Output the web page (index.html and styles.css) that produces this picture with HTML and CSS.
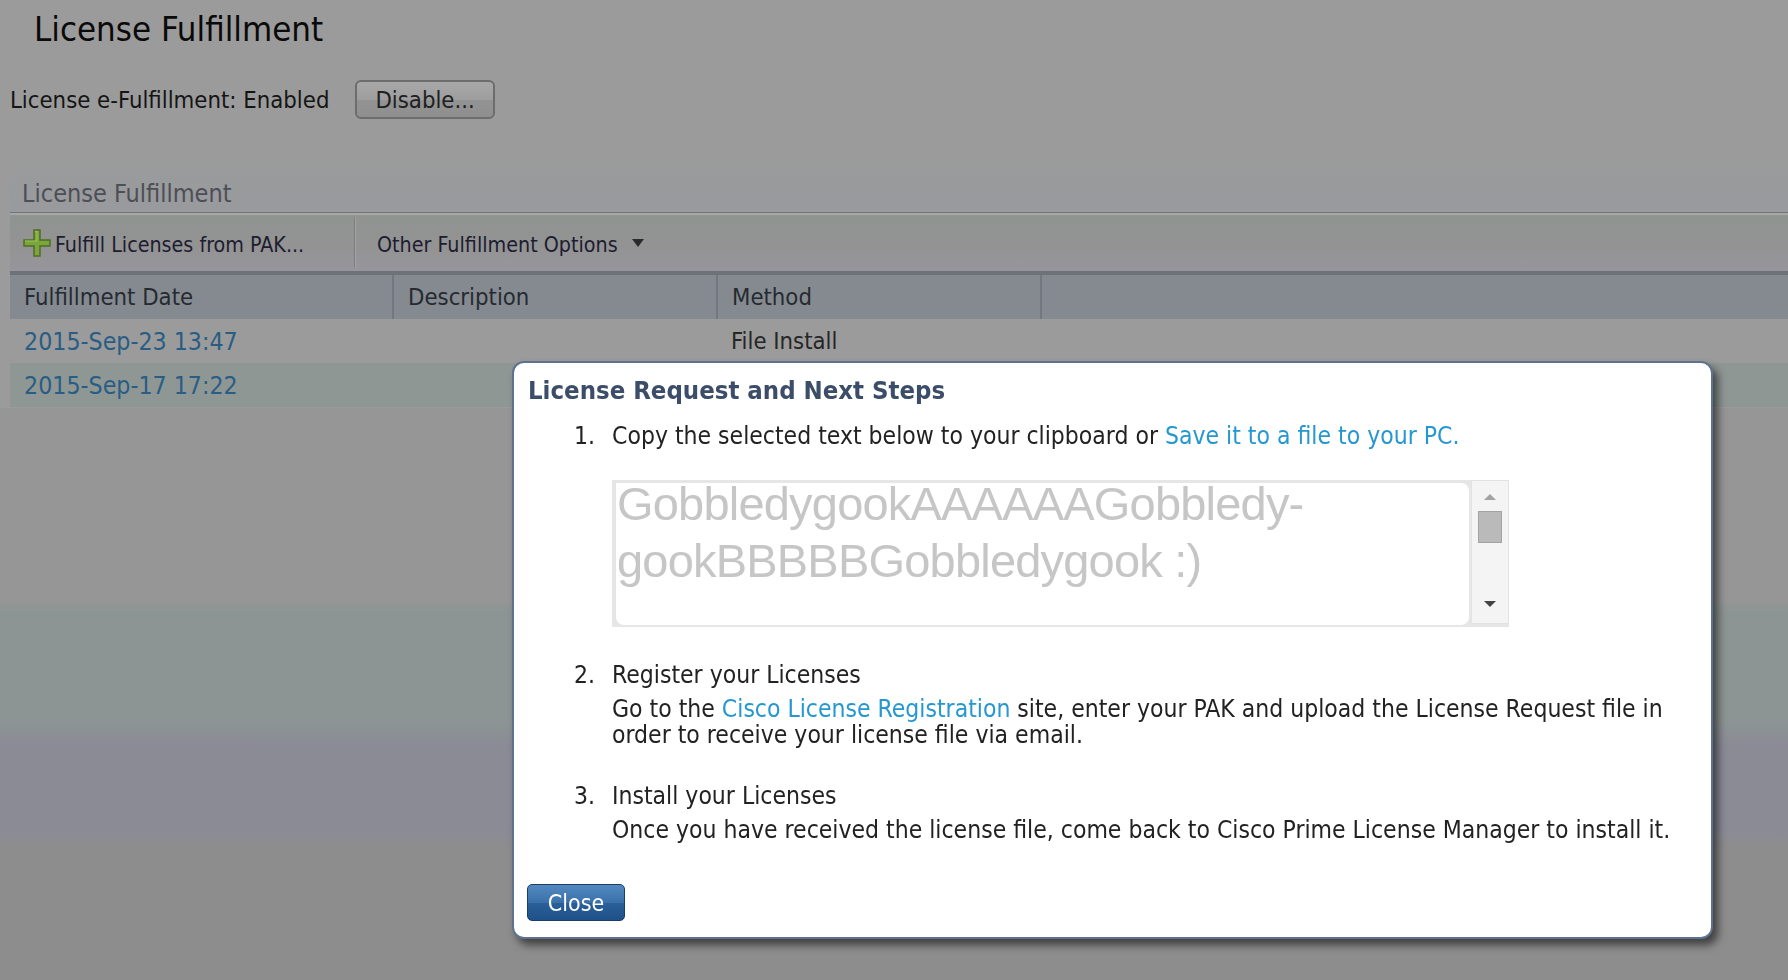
FILE: index.html
```html
<!DOCTYPE html>
<html lang="en">

<head>
    <meta charset="UTF-8">
    <title>License Fulfillment</title>
    <link rel="stylesheet" href="styles.css">
</head>

<body>
    <div class="page">
        <h1 class="page-title">License Fulfillment</h1>
        <div class="status-row">
            <span class="status-text">License e-Fulfillment: Enabled</span>
            <button class="btn-gray">Disable...</button>
        </div>

        <div class="panel">
            <div class="panel-title">License Fulfillment</div>
            <div class="toolbar">
                <div class="tool tool-add">
                    <svg class="icon-plus" width="30" height="30" viewBox="0 0 30 30">
                        <path d="M12 2h6v10h10v6H18v10h-6V18H2v-6h10z" fill="#7aa63b" stroke="#4f6e24"
                            stroke-width="1.5" />
                        <path d="M13 3.5h2v9.5H3.5v-0.5" fill="none" stroke="#9cc45c" stroke-width="1" />
                    </svg>
                    <span>Fulfill Licenses from PAK...</span>
                </div>
                <div class="tool tool-menu">
                    <span>Other Fulfillment Options</span>
                    <span class="caret"></span>
                </div>
            </div>
            <table class="grid">
                <thead>
                    <tr>
                        <th class="col-date">Fulfillment Date</th>
                        <th class="col-desc">Description</th>
                        <th class="col-method">Method</th>
                        <th></th>
                    </tr>
                </thead>
                <tbody>
                    <tr>
                        <td><a href="#">2015-Sep-23 13:47</a></td>
                        <td></td>
                        <td>File Install</td>
                        <td></td>
                    </tr>
                    <tr class="selected">
                        <td><a href="#">2015-Sep-17 17:22</a></td>
                        <td></td>
                        <td></td>
                        <td></td>
                    </tr>
                </tbody>
            </table>
        </div>
    </div>

    <!-- modal dialog -->
    <div class="dialog">
        <div class="dialog-title">License Request and Next Steps</div>

        <div class="step step-first">
            <span class="step-num">1.</span>
            <div class="step-body">
                <div>Copy the selected text below to your clipboard or <a href="#">Save it to a file to your PC.</a></div>
                <div class="request-box">
                    <div class="request-text">
                        <div class="request-lines">GobbledygookAAAAAAGobbledy-gookBBBBBGobbledygook :)</div>
                    </div>
                    <div class="scrollbar">
                        <span class="arrow-up"></span>
                        <span class="thumb"></span>
                        <span class="arrow-down"></span>
                    </div>
                </div>
            </div>
        </div>

        <div class="step">
            <span class="step-num">2.</span>
            <div class="step-body">
                <div>Register your Licenses</div>
                <div class="step-desc">Go to the <a href="#">Cisco License Registration</a> site, enter your PAK and upload the License Request file in<br>order to receive your license file via email.</div>
            </div>
        </div>

        <div class="step">
            <span class="step-num">3.</span>
            <div class="step-body">
                <div>Install your Licenses</div>
                <div class="step-desc">Once you have received the license file, come back to Cisco Prime License Manager to install it.</div>
            </div>
        </div>

        <button class="btn-blue">Close</button>
    </div>
</body>

</html>
```

FILE: styles.css
```css
body {
    margin: 0;
    min-height: 980px;
    font-family: "DejaVu Sans Condensed", "DejaVu Sans", sans-serif;
    font-size: 23.7px;
    color: #151515;
    background: linear-gradient(to bottom,
            #9b9b9b 0, #9b9b9b 408px,
            #969696 408px, #969696 600px,
            #8c9593 612px, #8c9593 722px,
            #8b8b96 745px, #8b8b96 830px,
            #8d8d8d 850px, #8d8d8d 980px);
}

a {
    text-decoration: none;
}

.page-title {
    margin: 0;
    padding: 7px 0 0 34px;
    font-size: 34.5px;
    font-weight: normal;
    line-height: 44px;
    color: #0a0a0a;
}

.status-row {
    display: flex;
    align-items: center;
    gap: 26px;
    margin-top: 29px;
    padding-left: 10px;
}

.btn-gray {
    height: 39px;
    width: 140px;
    padding: 0 0 0 18px;
    text-align: left;
    font-family: inherit;
    font-size: 23.7px;
    color: #202020;
    background: linear-gradient(#a8a8a8, #9e9e9e 50%, #939393 52%, #8f8f8f);
    border: 2px solid #6d6d6d;
    border-radius: 6px;
}

.panel {
    margin: 30px 0 0 10px;
}

.panel-title {
    padding: 30px 0 3px 12px;
    font-size: 25px;
    line-height: 30px;
    color: #4d4e56;
    background: linear-gradient(#9b9b9b, #989a9d);
    border-bottom: 1px solid #737578;
}

.toolbar {
    display: flex;
    height: 56px;
    border-top: 2px solid #a6a8a8;
    background: linear-gradient(#8f9491, #939393 55%, #97959c);
    color: #1d1d30;
    font-size: 21.3px;
}

.tool {
    display: flex;
    align-items: center;
    padding-top: 5px;
}

.tool-add {
    width: 345px;
    box-sizing: border-box;
    padding-left: 12px;
    border-right: 1px solid #7c7c7c;
    margin: 2px 0 4px;
}

.icon-plus {
    margin: -3px 3px 0 0;
}

.tool-menu {
    padding-left: 21px;
    border-left: 1px solid #a4a4a4;
    margin: 2px 0 4px;
}

.caret {
    width: 0;
    height: 0;
    margin: -4px 0 0 14px;
    border-left: 6px solid transparent;
    border-right: 6px solid transparent;
    border-top: 8px solid #2a2a2a;
}

.grid {
    width: 100%;
    border-collapse: collapse;
    border-top: 4px solid #6c7278;
}

.grid th,
.grid td {
    height: 44px;
    padding: 0 0 0 14px;
    text-align: left;
    font-weight: normal;
    white-space: nowrap;
}

.grid th {
    background: #858a91;
    color: #252a30;
    border-right: 2px solid #727880;
}

.grid th:last-child {
    border-right: none;
}

.col-date {
    width: 368px;
}

.col-desc,
.col-method {
    width: 308px;
}

.grid td {
    background: #9b9b9b;
    color: #262626;
}

.grid td a {
    color: #2a5d84;
    font-size: 24.7px;
}

.grid .selected td {
    background: #8f9795;
}

/* dialog */

.dialog {
    position: fixed;
    left: 512px;
    top: 361px;
    width: 1201px;
    box-sizing: border-box;
    padding: 12px 20px 16px 14px;
    background: #fff;
    border: 2px solid #5d7290;
    border-radius: 12px;
    box-shadow: 5px 6px 9px rgba(0, 0, 0, 0.55);
    color: #222;
    font-size: 24.5px;
    line-height: 26px;
}

.dialog a {
    color: #2597d1;
}

.dialog-title {
    font-size: 25.5px;
    font-weight: bold;
    line-height: 30px;
    color: #3b4d68;
}

.step {
    display: flex;
    margin: 35px 0 0 46px;
    white-space: nowrap;
}

.step-first {
    margin-top: 18px;
}

.step-num {
    width: 38px;
    flex-shrink: 0;
}

.step-desc {
    margin-top: 8px;
}

.request-box {
    display: flex;
    width: 897px;
    height: 147px;
    margin-top: 31px;
    box-sizing: border-box;
    padding: 3px 0 0 4px;
    background: #e6e6e6;
}

.request-text {
    width: 853px;
    height: 142px;
    box-sizing: border-box;
    padding-left: 1px;
    background: #fff;
    border-radius: 0 8px 8px 8px;
}

.request-lines {
    margin-top: -8px;
    font-family: "Liberation Sans", Arial, sans-serif;
    font-size: 47px;
    letter-spacing: -0.8px;
    line-height: 57px;
    color: #c6c6c6;
    white-space: normal;
}

.scrollbar {
    display: flex;
    flex-direction: column;
    align-items: center;
    width: 38px;
    height: 144px;
    margin: -3px 0 0 2px;
    box-sizing: border-box;
    background: #f4f4f4;
    border: 1px solid #e3e3e3;
}

.arrow-up {
    margin-top: 13px;
    border-left: 6px solid transparent;
    border-right: 6px solid transparent;
    border-bottom: 6px solid #a3a3a3;
}

.thumb {
    width: 24px;
    height: 32px;
    margin-top: 11px;
    box-sizing: border-box;
    background: #bababa;
    border: 1px solid #a3a3a3;
}

.arrow-down {
    margin-top: auto;
    margin-bottom: 16px;
    border-left: 6px solid transparent;
    border-right: 6px solid transparent;
    border-top: 6px solid #444;
}

.btn-blue {
    display: block;
    height: 37px;
    width: 98px;
    margin: 41px 0 0 -1px;
    padding: 0;
    font-family: inherit;
    font-size: 23px;
    color: #fff;
    background: linear-gradient(#5189c0, #3b71aa 50%, #2a5f97 52%, #1f5189);
    border: 1px solid #1b3c64;
    border-radius: 5px;
}
```
